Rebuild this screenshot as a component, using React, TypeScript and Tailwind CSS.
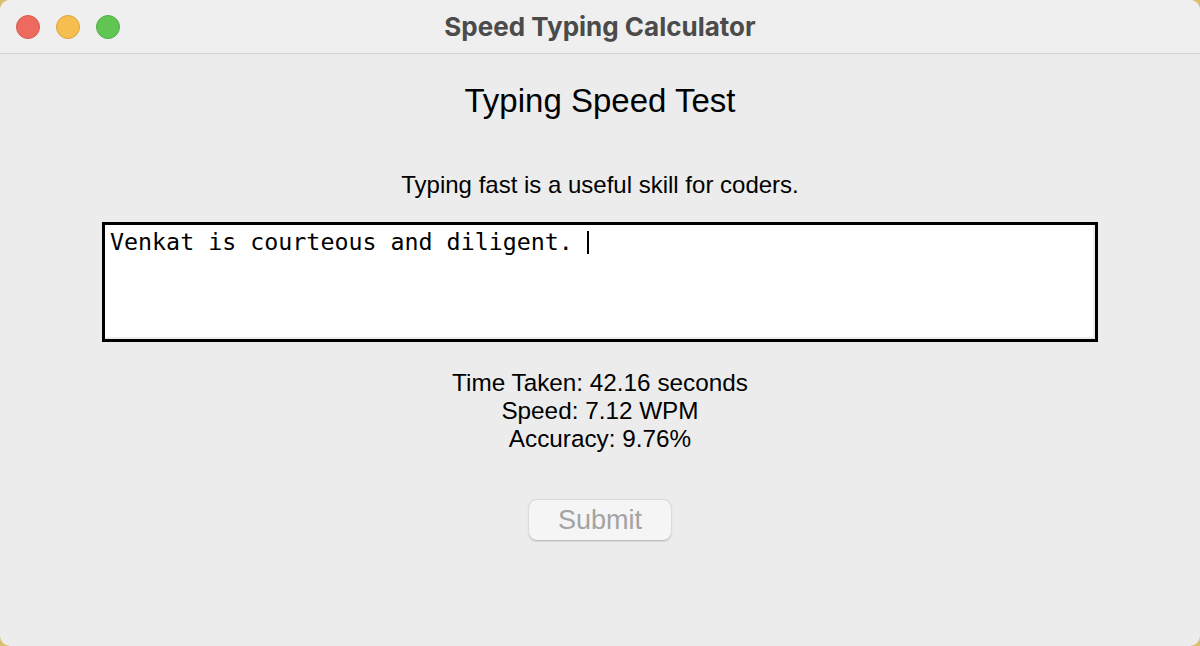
import React from 'react';

const TrafficLights: React.FC = () => (
  <div className="flex items-center gap-4 pl-4">
    <span className="w-6 h-6 rounded-full bg-[#ee6a5f] border border-[#d65a4f]" />
    <span className="w-6 h-6 rounded-full bg-[#f5be4f] border border-[#dca53c]" />
    <span className="w-6 h-6 rounded-full bg-[#61c554] border border-[#4fae44]" />
  </div>
);

const App: React.FC = () => {
  const typed = 'Venkat is courteous and diligent. ';

  return (
    <div className="w-[1200px] h-[646px] bg-[#d8c06e] overflow-hidden">
      <div className="w-full h-full rounded-[10px] bg-[#ececec] overflow-hidden flex flex-col font-['Liberation_Sans',Arial,sans-serif]">
        {/* title bar */}
        <div className="relative h-[54px] shrink-0 bg-[#efefef] border-b border-[#d2d2d2] flex items-center">
          <TrafficLights />
          <div className="absolute inset-0 flex items-center justify-center font-['Inter',sans-serif] text-[26px] font-bold text-[#4b4b4b] pointer-events-none">
            Speed Typing Calculator
          </div>
        </div>

        {/* body */}
        <div className="flex flex-col items-center text-black">
          <h1 className="mt-[28px] text-[33px] leading-[38px]">Typing Speed Test</h1>
          <p className="mt-[51px] text-[24px] leading-[28px]">Typing fast is a useful skill for coders.</p>

          <div className="mt-[23px] w-[996px] h-[120px] border-[3.5px] border-black bg-white shadow-[inset_-2px_-2px_0_#ededed] pl-[5px] pt-[4px]">
            <div className="flex items-center font-['DejaVu_Sans_Mono',monospace] text-[23.3px] leading-[26px] whitespace-pre">
              <span>{typed}</span>
              <span className="w-[2px] h-[23px] bg-black" />
            </div>
          </div>

          <div className="mt-[27px] flex flex-col items-center text-[24.3px] leading-[28px]">
            <span>Time Taken: 42.16 seconds</span>
            <span>Speed: 7.12 WPM</span>
            <span>Accuracy: 9.76%</span>
          </div>

          <button
            disabled
            className="mt-[47px] w-[142px] h-[40px] rounded-[8px] bg-[#f5f5f5] text-[#a3a3a3] text-[27px] shadow-[0_0.5px_2px_rgba(0,0,0,0.28)]"
          >
            Submit
          </button>
        </div>
      </div>
    </div>
  );
};

export default App;
